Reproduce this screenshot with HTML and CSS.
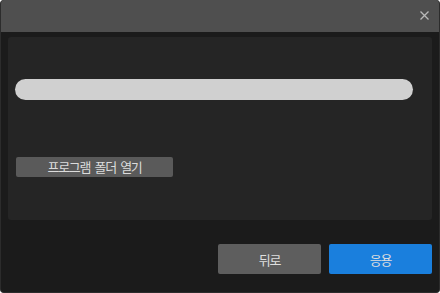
FILE: index.html
```html
<!DOCTYPE html>
<html lang="ko">
<head>
    <meta charset="UTF-8">
    <meta name="viewport" content="width=device-width, initial-scale=1.0">
    <title>설정</title>
    <link rel="stylesheet" href="styles.css">
</head>
<body>

<div class="window">
    <div class="titlebar">
        <button class="close-btn" aria-label="닫기">
            <svg width="9" height="9" viewBox="0 0 9 9">
                <path d="M0.5 0.5 L8.5 8.5 M8.5 0.5 L0.5 8.5" stroke="#b9b9b9" stroke-width="1.3"/>
            </svg>
        </button>
    </div>

    <div class="content">
        <div class="panel">
            <div class="progress"></div>
            <button class="folder-btn">프로그램 폴더 열기</button>
        </div>
    </div>

    <div class="footer">
        <button class="btn btn-back">뒤로</button>
        <button class="btn btn-apply">응용</button>
    </div>
</div>

</body>
</html>
```

FILE: styles.css
```css
body {
    margin: 0;
    padding: 0;
    background-color: #ffffff;
    font-family: "Noto Sans CJK KR", "Noto Sans", sans-serif;
}
.window {
    width: 440px;
    height: 293px;
    box-sizing: border-box;
    background-color: #1b1b1b;
    border-radius: 4px;
    border: 1px solid #2c2c2c;
    border-top: none;
    overflow: hidden;
    display: flex;
    flex-direction: column;
}
.titlebar {
    height: 32px;
    background-color: #4f4f4f;
    display: flex;
    justify-content: flex-end;
    align-items: center;
    flex-shrink: 0;
}
.close-btn {
    background: none;
    border: none;
    padding: 0;
    margin-right: 10px;
    margin-top: -1px;
    width: 9px;
    height: 9px;
    display: flex;
    cursor: pointer;
}
.content {
    padding: 5px 7px 0 7px;
}
.panel {
    height: 183px;
    background-color: #252525;
    border-radius: 3px;
    padding: 42px 19px 0 7px;
    box-sizing: border-box;
}
.progress {
    height: 21px;
    background-color: #d0d0d0;
    border-radius: 11px;
}
.folder-btn {
    display: block;
    margin: 57px 0 0 1px;
    width: 157px;
    height: 20px;
    padding: 0;
    background-color: #5a5a5a;
    color: #dcdcdc;
    border: none;
    border-radius: 2px;
    font-family: inherit;
    font-size: 13px;
    letter-spacing: -1.3px;
    word-spacing: 2px;
    line-height: 20px;
    cursor: pointer;
}
.footer {
    display: flex;
    justify-content: flex-end;
    gap: 8px;
    padding: 24px 7px 0 0;
}
.btn {
    width: 103px;
    height: 30px;
    padding: 0;
    border: none;
    border-radius: 2px;
    color: #dedede;
    font-family: inherit;
    font-size: 13px;
    letter-spacing: -1.3px;
    cursor: pointer;
}
.btn-back {
    background-color: #5e5e5e;
}
.btn-apply {
    background-color: #1a7fdd;
}
```
